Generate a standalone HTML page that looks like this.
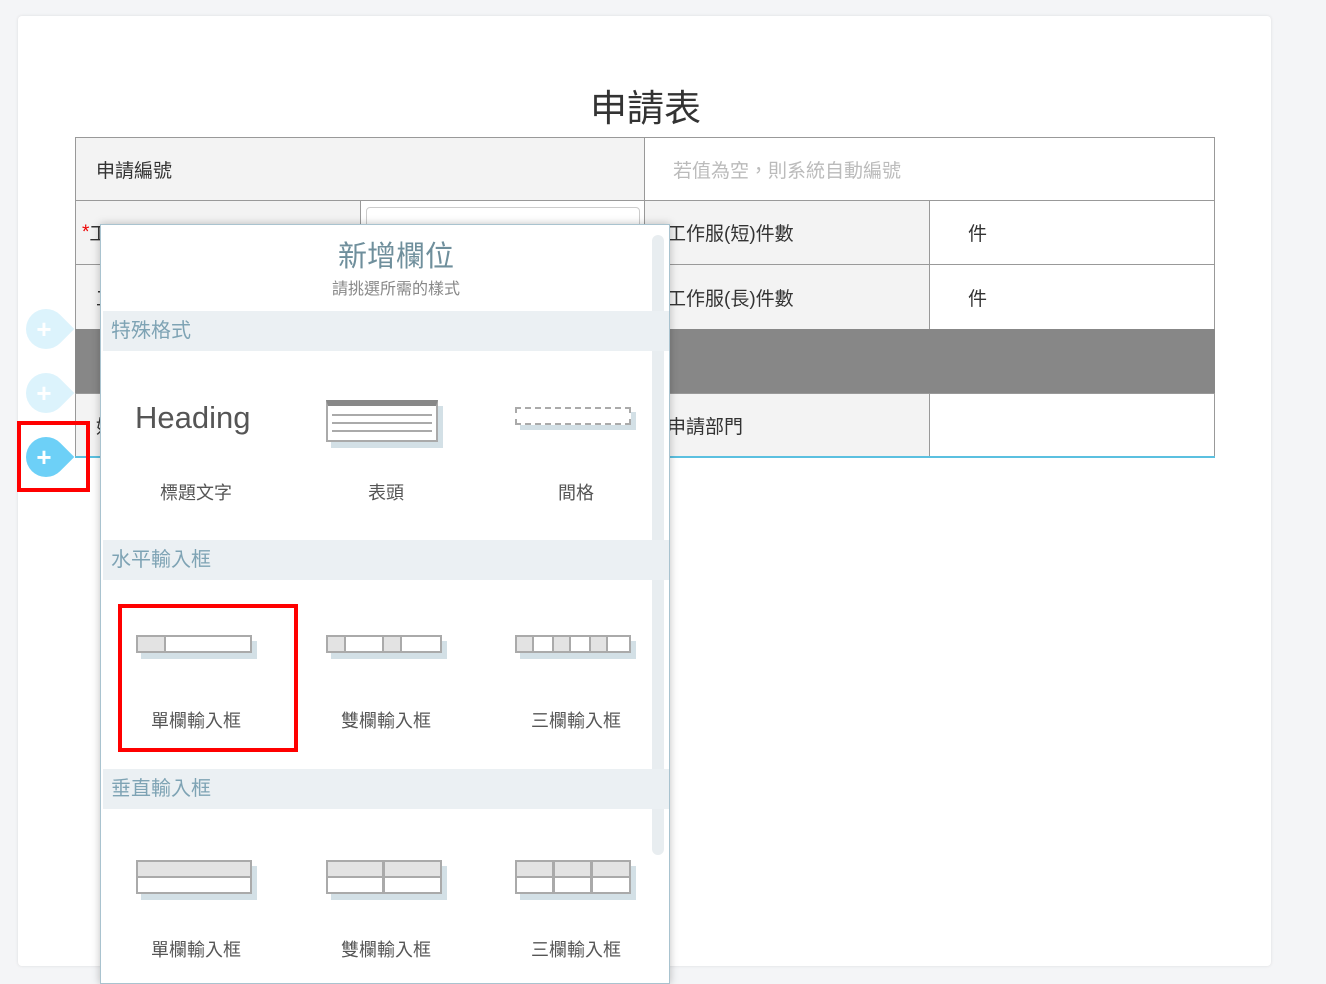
<!DOCTYPE html>
<html><head><meta charset="utf-8"><style>
*{box-sizing:border-box;margin:0;padding:0}
body{width:1326px;height:978px;background:#f4f5f7;position:relative;overflow:hidden;font-family:"Liberation Sans","Noto Sans CJK TC",sans-serif}
.a{position:absolute}
.card{left:18px;top:16px;width:1253px;height:950px;background:#fff;border-radius:4px;box-shadow:0 0 3px rgba(0,0,0,.1)}
.c{position:absolute;border:1px solid #999;font-size:19px;color:#333;display:flex;align-items:center}
.lbl{background:#f3f3f3}
.pop{left:100px;top:224px;width:570px;height:760px;background:#fff;border:1px solid #a9c3cf;box-shadow:0 0 8px rgba(0,0,0,.25)}
.sec{position:absolute;left:2px;width:566px;height:40px;background:#ebf0f3;color:#7ea3b4;font-size:20px;padding-left:8px;line-height:40px}
.it{position:absolute;font-size:18px;color:#555;width:160px;text-align:center}
.ico{position:absolute;border:2px solid #aaa;background:#fff;box-shadow:5px 6px 0 #d3e0e6;display:flex}
.ico i{display:block;height:100%;border-right:2px solid #aaa}
.g{background:#e3e3e3}
.pin{position:absolute;width:40px;height:40px;border-radius:50% 0 50% 50%;transform:rotate(45deg);}
.pl{position:absolute;color:#fff;font-size:26px;font-weight:bold;width:40px;text-align:center;line-height:40px}
</style></head><body>
<div class="a card"></div>
<div class="a" style="left:590px;top:78px;font-size:37px;color:#333">申請表</div>
<div class="c lbl" style="left:75px;top:137px;width:570px;height:64px;padding-left:20px">申請編號</div>
<div class="c" style="left:644px;top:137px;width:571px;height:64px;padding-left:28px;color:#bbb">若值為空，則系統自動編號</div>
<div class="c lbl" style="left:75px;top:200px;width:286px;height:65px;padding-left:6px;color:#e00">*<span style="color:#333">工</span></div>
<div class="c" style="left:360px;top:200px;width:285px;height:65px"></div>
<div class="a" style="left:366px;top:207px;width:274px;height:30px;border:1px solid #ccc;border-radius:4px"></div>
<div class="c lbl" style="left:644px;top:200px;width:286px;height:65px;padding-left:22px">工作服(短)件數</div>
<div class="c" style="left:929px;top:200px;width:286px;height:65px;padding-left:38px">件</div>
<div class="c lbl" style="left:75px;top:264px;width:570px;height:66px;padding-left:20px">工</div>
<div class="c lbl" style="left:644px;top:264px;width:286px;height:66px;padding-left:22px">工作服(長)件數</div>
<div class="c" style="left:929px;top:264px;width:286px;height:66px;padding-left:38px">件</div>
<div class="a" style="left:75px;top:329px;width:1140px;height:65px;background:#878787"></div>
<div class="c lbl" style="left:75px;top:393px;width:570px;height:65px;padding-left:20px">姓</div>
<div class="c lbl" style="left:644px;top:393px;width:286px;height:65px;padding-left:22px">申請部門</div>
<div class="c" style="left:929px;top:393px;width:286px;height:65px"></div>
<div class="a" style="left:75px;top:456px;width:1140px;height:2px;background:#5bc0e0"></div>

<div class="pin" style="left:26px;top:309px;background:#dcf3fc"></div><div class="pl" style="left:24px;top:309px">+</div>
<div class="pin" style="left:26px;top:373px;background:#dcf3fc"></div><div class="pl" style="left:24px;top:373px">+</div>
<div class="pin" style="left:26px;top:437px;background:#6dd0f7"></div><div class="pl" style="left:24px;top:437px">+</div>
<div class="a" style="left:17px;top:421px;width:73px;height:71px;border:4px solid #f00"></div>

<div class="a pop">
 <div class="a" style="left:551px;top:10px;width:12px;height:620px;background:#e8edf0;border-radius:6px"></div>
 <div class="a" style="left:0;top:8px;width:590px;text-align:center;font-size:29px;color:#6f8f9c">新增欄位</div>
 <div class="a" style="left:0;top:50px;width:590px;text-align:center;font-size:16px;color:#888">請挑選所需的樣式</div>
 <div class="sec" style="top:86px">特殊格式</div>
 <div class="a" style="left:34px;top:175px;font-size:31px;color:#555">Heading</div>
 <div class="ico" style="left:225px;top:175px;width:112px;height:42px;border-top:6px solid #888;flex-direction:column;justify-content:space-evenly;padding:2px 4px"><b style="border-top:2px solid #aaa"></b><b style="border-top:2px solid #aaa"></b><b style="border-top:2px solid #aaa"></b></div>
 <div class="a" style="left:414px;top:182px;width:116px;height:18px;border:2px dashed #aaa;box-shadow:5px 5px 0 #d3e0e6"></div>
 <div class="it" style="left:15px;top:254px">標題文字</div>
 <div class="it" style="left:205px;top:254px">表頭</div>
 <div class="it" style="left:395px;top:254px">間格</div>
 <div class="sec" style="top:315px">水平輸入框</div>
 <div class="ico" style="left:35px;top:410px;width:116px;height:18px"><i class="g" style="width:28px"></i></div>
 <div class="ico" style="left:225px;top:410px;width:116px;height:18px"><i class="g" style="width:18px"></i><i style="width:38px"></i><i class="g" style="width:18px"></i></div>
 <div class="ico" style="left:414px;top:410px;width:116px;height:18px"><i class="g" style="width:17px"></i><i style="width:20px"></i><i class="g" style="width:17px"></i><i style="width:20px"></i><i class="g" style="width:17px"></i></div>
 <div class="it" style="left:15px;top:482px">單欄輸入框</div>
 <div class="it" style="left:205px;top:482px">雙欄輸入框</div>
 <div class="it" style="left:395px;top:482px">三欄輸入框</div>
 <div class="sec" style="top:544px">垂直輸入框</div>
 <div class="ico" style="left:35px;top:635px;width:116px;height:34px;background:linear-gradient(#e3e3e3 0 14px,#aaa 14px 16px,#fff 16px)"></div>
 <div class="ico" style="left:225px;top:635px;width:116px;height:34px;background:linear-gradient(#e3e3e3 0 14px,#aaa 14px 16px,#fff 16px)"><i style="width:57px;border-right-width:3px"></i></div>
 <div class="ico" style="left:414px;top:635px;width:116px;height:34px;background:linear-gradient(#e3e3e3 0 14px,#aaa 14px 16px,#fff 16px)"><i style="width:38px;border-right-width:3px"></i><i style="width:38px;border-right-width:3px"></i></div>
 <div class="it" style="left:15px;top:711px">單欄輸入框</div>
 <div class="it" style="left:205px;top:711px">雙欄輸入框</div>
 <div class="it" style="left:395px;top:711px">三欄輸入框</div>
</div>
<div class="a" style="left:118px;top:604px;width:180px;height:148px;border:4px solid #f00"></div>
</body></html>
